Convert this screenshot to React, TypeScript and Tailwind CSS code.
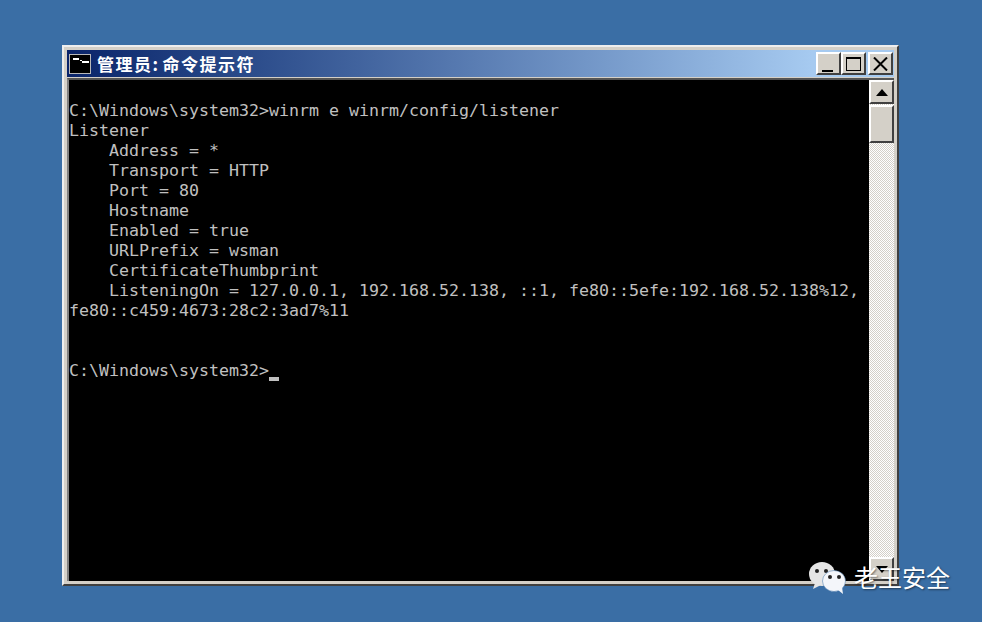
const lines = [
  "C:\\Windows\\system32>winrm e winrm/config/listener",
  "Listener",
  "    Address = *",
  "    Transport = HTTP",
  "    Port = 80",
  "    Hostname",
  "    Enabled = true",
  "    URLPrefix = wsman",
  "    CertificateThumbprint",
  "    ListeningOn = 127.0.0.1, 192.168.52.138, ::1, fe80::5efe:192.168.52.138%12,",
  "fe80::c459:4673:28c2:3ad7%11",
  "",
  "",
];

function Btn({ children, className = "" }: { children?: React.ReactNode; className?: string }) {
  return (
    <div
      className={
        "flex items-center justify-center bg-[#d4d0c8] border-t-2 border-l-2 border-t-white border-l-white border-b-2 border-r-2 border-b-[#404040] border-r-[#404040] " +
        className
      }
    >
      {children}
    </div>
  );
}

export default function App() {
  return (
    <div className="relative w-[982px] h-[622px] overflow-hidden bg-[#3a6ea5] pt-[45px] pl-[62px]">
      <div className="w-[837px] h-[541px] bg-[#d4d0c8] border-t-2 border-l-2 border-t-[#eeeeee] border-l-[#eeeeee] border-b-2 border-r-2 border-b-[#404040] border-r-[#404040] p-[3px] flex flex-col">
        <div className="h-[27px] shrink-0 flex items-center pl-[2px] pr-[1px] bg-gradient-to-r from-[#0a246a] to-[#a6caf0] to-90%">
          <div className="w-[22px] h-[20px] bg-black border border-[#b8b8b8] relative shrink-0">
            <div className="absolute left-[3px] top-[3px] w-[6px] h-[2px] bg-white" />
            <div className="absolute left-[10px] top-[5px] w-[2px] h-[1px] bg-white" />
            <div className="absolute left-[12px] top-[6px] w-[7px] h-[2px] bg-white" />
          </div>
          <span className="ml-[6px] text-[17px] leading-[20px] text-white font-bold tracking-[1.5px] whitespace-pre [font-family:'Noto_Sans_CJK_SC',sans-serif]">
            管理员:
          </span>
          <span className="ml-[3px] text-[17px] leading-[20px] text-white font-bold tracking-[1.5px] whitespace-pre [font-family:'Noto_Sans_CJK_SC',sans-serif]">
            命令提示符
          </span>
          <div className="ml-auto flex items-center">
            <Btn className="w-[25px] h-[23px] items-end">
              <div className="w-[11px] h-[2px] bg-black mb-[1px] -ml-[2px]" />
            </Btn>
            <Btn className="w-[25px] h-[23px]">
              <div className="w-[15px] h-[14px] border border-black border-t-2" />
            </Btn>
            <Btn className="w-[25px] h-[23px] ml-[2px]">
              <svg width="15" height="14" viewBox="0 0 15 14">
                <path d="M1 0.5 L14 13.5 M14 0.5 L1 13.5" stroke="#000" strokeWidth="2" />
              </svg>
            </Btn>
          </div>
        </div>
        <div className="flex-1 min-h-0 flex mt-[1px] border-t-2 border-l-2 border-t-[#555555] border-l-[#808080]">
          <div className="w-[800px] shrink-0 bg-black text-[#c0c0c0] pt-[21px] text-[16.61px] leading-[20px] whitespace-pre [font-family:'DejaVu_Sans_Mono',monospace]">
            {lines.map((l, i) => (
              <div key={i} className="h-[20px] w-[800px] overflow-hidden">
                {l}
              </div>
            ))}
            <div className="h-[20px] relative">
              {"C:\\Windows\\system32>"}
              <span className="absolute left-[200px] top-[16px] w-[10px] h-[4px] bg-[#c0c0c0]" />
            </div>
          </div>
          <div className="w-[25px] shrink-0 flex flex-col bg-[repeating-conic-gradient(#d4d0c8_0_25%,#ffffff_0_50%)] bg-[length:2px_2px]">
            <Btn className="h-[24px] shrink-0">
              <svg width="12" height="7" viewBox="0 0 12 7"><path d="M6 0 L12 7 L0 7 Z" fill="#000" /></svg>
            </Btn>
            <Btn className="h-[38px] shrink-0 mt-px" />
            <div className="flex-1" />
            <Btn className="h-[24px] shrink-0">
              <svg width="12" height="7" viewBox="0 0 12 7"><path d="M0 0 L12 0 L6 7 Z" fill="#000" /></svg>
            </Btn>
          </div>
        </div>
      </div>
      <div className="absolute left-[807px] top-[559px] flex items-center">
        <svg width="40" height="36" viewBox="0 0 40 36">
          <ellipse cx="15" cy="15" rx="13" ry="12" fill="#e6e6e6" />
          <path d="M8 24 L6 30 L14 26 Z" fill="#e6e6e6" />
          <circle cx="10" cy="12" r="2" fill="#222" />
          <circle cx="19" cy="12" r="2" fill="#222" />
          <ellipse cx="27" cy="22" rx="11.5" ry="10.5" fill="#f4f6fa" stroke="#3a6ea5" strokeWidth="0.5" />
          <path d="M31 31 L36 35 L35 28 Z" fill="#f4f6fa" />
          <circle cx="23" cy="18" r="2" fill="#222" />
          <circle cx="32" cy="18" r="2" fill="#222" />
        </svg>
        <span className="ml-[7px] text-[24px] leading-[28px] text-white whitespace-nowrap [text-shadow:1px_1px_2px_rgba(0,0,0,0.5)] [font-family:'Noto_Sans_CJK_SC',sans-serif]">
          老王安全
        </span>
      </div>
    </div>
  );
}
